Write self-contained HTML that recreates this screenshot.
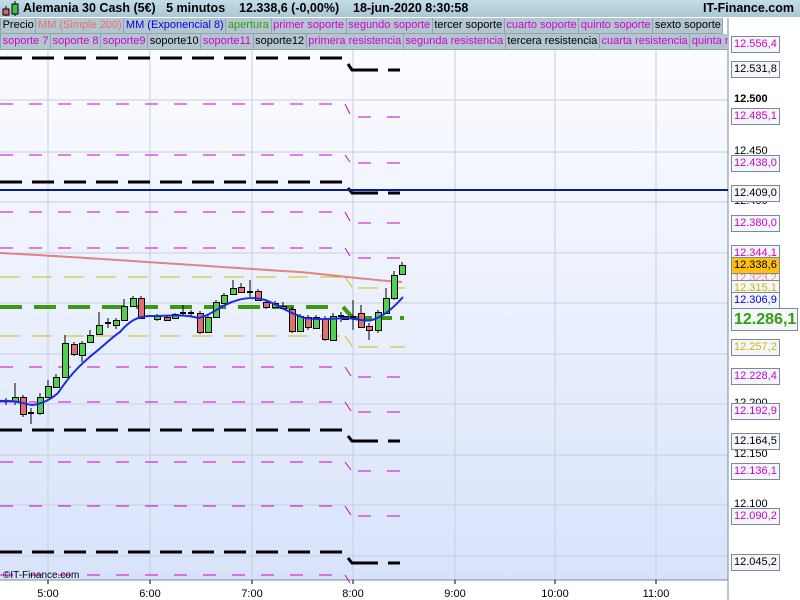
<!DOCTYPE html>
<html><head><meta charset="utf-8"><style>
body{margin:0;width:800px;height:600px;overflow:hidden;font-family:"Liberation Sans",sans-serif;background:#fff;position:relative}
#hdr{position:absolute;left:0;top:0;width:800px;height:17px;background:linear-gradient(#c4dce6,#a9c7d4);font-weight:bold;font-size:12.5px;line-height:17px;color:#000}
.row{position:absolute;left:0;height:16px;font-size:11px;line-height:15px;white-space:nowrap;overflow:hidden}
.row span{display:inline-block;background:#b3c6cf;border:1px solid #90a4ae;border-top:none;padding:0 1.6px;margin-right:-1px;height:15px}
.m{color:#d000d0}.k{color:#000}
.lb{position:absolute;left:731px;width:45px;height:15px;border:1px solid #7a8a98;background:#f4f6fa;font-size:11px;line-height:15px;text-align:left;padding-left:2px;box-sizing:content-box}
.pl{position:absolute;left:734px;font-size:11px;color:#000}
</style></head><body>
<div id="hdr"><svg width="20" height="17" style="position:absolute;left:2px;top:0"><line x1="4" y1="6" x2="4" y2="16" stroke="#000"/><rect x="1" y="9" width="6" height="6" fill="#e06060" stroke="#000"/><line x1="13" y1="1" x2="13" y2="16" stroke="#000"/><rect x="10" y="4" width="6" height="10" fill="#40c040" stroke="#000"/></svg>
<span style="position:absolute;left:23px">Alemania 30 Cash (5€)&nbsp;&nbsp; 5 minutos&nbsp;&nbsp;&nbsp; 12.338,6 (-0,00%)&nbsp;&nbsp;&nbsp; 18-jun-2020 8:30:58</span><span style="position:absolute;right:6px">IT-Finance.com</span></div>
<div class="row" style="top:18px;width:728px"><span class="k">Precio</span><span style="color:#e87070">MM (Simple 200)</span><span style="color:#0000ee">MM (Exponencial 8)</span><span style="color:#30a010">apertura</span><span class="m">primer soporte</span><span class="m">segundo soporte</span><span class="k">tercer soporte</span><span class="m">cuarto soporte</span><span class="m">quinto soporte</span><span class="k">sexto soporte</span></div>
<div class="row" style="top:34px;width:728px"><span class="m">soporte 7</span><span class="m">soporte 8</span><span class="m">soporte9</span><span class="k">soporte10</span><span class="m">soporte11</span><span class="k">soporte12</span><span class="m">primera resistencia</span><span class="m">segunda resistencia</span><span class="k">tercera resistencia</span><span class="m">cuarta resistencia</span><span class="m">quinta resistencia</span></div>
<svg width="800" height="600" style="position:absolute;left:0;top:0;z-index:-1">
<defs><linearGradient id="bg" x1="0" y1="0" x2="0" y2="1"><stop offset="0" stop-color="#fbfcff"/><stop offset="1" stop-color="#d8e3fb"/></linearGradient></defs>
<rect x="0" y="50" width="728" height="530" fill="url(#bg)"/>
<g stroke="#c8cedc" stroke-width="1">
<line x1="0" y1="100" x2="728" y2="100"/><line x1="0" y1="152" x2="728" y2="152"/><line x1="0" y1="202" x2="728" y2="202"/><line x1="0" y1="253" x2="728" y2="253"/><line x1="0" y1="303" x2="728" y2="303"/><line x1="0" y1="354" x2="728" y2="354"/><line x1="0" y1="404" x2="728" y2="404"/><line x1="0" y1="455" x2="728" y2="455"/><line x1="0" y1="505" x2="728" y2="505"/><line x1="0" y1="556" x2="728" y2="556"/>
<line x1="48" y1="50" x2="48" y2="580"/><line x1="150" y1="50" x2="150" y2="580"/><line x1="252" y1="50" x2="252" y2="580"/><line x1="353" y1="50" x2="353" y2="580"/><line x1="455" y1="50" x2="455" y2="580"/><line x1="555" y1="50" x2="555" y2="580"/><line x1="656" y1="50" x2="656" y2="580"/>
</g>
<line x1="728" y1="18" x2="728" y2="600" stroke="#7a8a98"/>
<line x1="0" y1="580" x2="728" y2="580" stroke="#7a8a98"/>
<g stroke="#d000d0" stroke-width="1" fill="none">
<g stroke-dasharray="13,16"><path d="M0 104H345"/><path d="M0 155H345"/><path d="M0 212H345"/><path d="M0 248H345"/><path d="M0 367H345"/><path d="M0 402H345"/><path d="M0 462H345"/><path d="M0 506H345"/><path d="M0 575H345"/>
<path d="M358 117H405"/><path d="M358 163H405"/><path d="M358 223H405"/><path d="M358 258H405"/><path d="M358 377H405"/><path d="M358 412H405"/><path d="M358 471H405"/><path d="M358 516H405"/></g>
<path d="M345 104L350 114M345 155L350 162M345 212L350 221M345 248L350 256M345 367L351 376M345 402L351 411M345 462L351 470M345 506L351 515M345 575L350 583"/>
</g>
<g stroke="#d0c000" stroke-width="1" fill="none"><g stroke-dasharray="20,12"><path d="M0 277H345"/><path d="M0 336H345"/><path d="M358 288H405"/><path d="M358 347H405"/></g><path d="M345 277L352 287M345 336L352 346"/></g>
<g stroke="#000" stroke-width="3" fill="none"><g stroke-dasharray="22,10"><path d="M0 58H342"/><path d="M0 182H342"/><path d="M0 430H342"/><path d="M0 552H342"/><path d="M356 70H400"/><path d="M356 193H400"/><path d="M356 441H400"/><path d="M356 563H400"/></g>
<path d="M348 64L352 70H366M348 188L352 193H366M348 436L352 441H366M348 558L352 563H366"/></g>
<line x1="0" y1="190" x2="728" y2="190" stroke="#0a1a90" stroke-width="2"/>
<path d="M0 253 C100 258 200 266 300 272 C340 276 370 280 402 282" stroke="#e07070" stroke-width="2" fill="none" opacity="0.85"/>
<g stroke="#3a9a10" stroke-width="4" fill="none"><path d="M0 307H340" stroke-dasharray="22,12"/><path d="M343 307L353 318H372M380 318H392M400 318H404"/></g>
<g stroke="#000" stroke-width="1">
<line x1="6" y1="398" x2="6" y2="405"/><line x1="15" y1="383" x2="15" y2="405"/><line x1="23" y1="395" x2="23" y2="417"/><line x1="31" y1="408" x2="31" y2="424"/><line x1="40" y1="393" x2="40" y2="415"/><line x1="48" y1="380" x2="48" y2="398"/><line x1="56" y1="374" x2="56" y2="388"/><line x1="65" y1="335" x2="65" y2="378"/><line x1="74" y1="342" x2="74" y2="356"/><line x1="82" y1="341" x2="82" y2="362"/><line x1="90" y1="330" x2="90" y2="343"/><line x1="99" y1="312" x2="99" y2="335"/><line x1="108" y1="318" x2="108" y2="328"/><line x1="116" y1="318" x2="116" y2="329"/><line x1="124" y1="299" x2="124" y2="321"/><line x1="133" y1="296" x2="133" y2="307"/><line x1="141" y1="296" x2="141" y2="319"/><line x1="157" y1="314" x2="157" y2="321"/><line x1="167" y1="315" x2="167" y2="321"/><line x1="175" y1="313" x2="175" y2="319"/><line x1="183" y1="305" x2="183" y2="316"/><line x1="191" y1="310" x2="191" y2="316"/><line x1="200" y1="311" x2="200" y2="334"/><line x1="208" y1="315" x2="208" y2="333"/><line x1="216" y1="300" x2="216" y2="318"/><line x1="224" y1="293" x2="224" y2="304"/><line x1="233" y1="280" x2="233" y2="295"/><line x1="241" y1="283" x2="241" y2="293"/><line x1="250" y1="280" x2="250" y2="297"/><line x1="258" y1="289" x2="258" y2="301"/><line x1="266" y1="300" x2="266" y2="309"/><line x1="275" y1="301" x2="275" y2="308"/><line x1="283" y1="302" x2="283" y2="310"/><line x1="292" y1="307" x2="292" y2="333"/><line x1="300" y1="314" x2="300" y2="332"/><line x1="308" y1="315" x2="308" y2="330"/><line x1="316" y1="315" x2="316" y2="329"/><line x1="325" y1="316" x2="325" y2="341"/><line x1="333" y1="313" x2="333" y2="341"/><line x1="341" y1="312" x2="341" y2="322"/><line x1="353" y1="300" x2="353" y2="330"/><line x1="361" y1="305" x2="361" y2="328"/><line x1="369" y1="323" x2="369" y2="340"/><line x1="378" y1="310" x2="378" y2="333"/><line x1="386" y1="288" x2="386" y2="314"/><line x1="394" y1="271" x2="394" y2="300"/><line x1="402" y1="262" x2="402" y2="275"/>
</g>
<g stroke="#000" stroke-width="1">
<g fill="#50d050">
<rect x="12.5" y="397.5" width="6" height="4"/><rect x="37.5" y="397.5" width="6" height="16"/><rect x="45.5" y="386.5" width="6" height="11"/><rect x="53.5" y="377.5" width="6" height="10"/><rect x="62.5" y="343.5" width="6" height="34"/><rect x="79.5" y="343.5" width="6" height="12"/><rect x="87.5" y="335.5" width="6" height="7"/><rect x="96.5" y="325.5" width="6" height="9"/><rect x="113.5" y="320.5" width="6" height="5"/><rect x="121.5" y="306.5" width="6" height="14"/><rect x="130.5" y="298.5" width="6" height="8"/><rect x="154.5" y="316.5" width="6" height="3"/><rect x="172.5" y="314.5" width="6" height="4"/><rect x="205.5" y="317.5" width="6" height="15"/><rect x="213.5" y="302.5" width="6" height="15"/><rect x="221.5" y="295.5" width="6" height="8"/><rect x="230.5" y="288.5" width="6" height="6"/><rect x="272.5" y="303.5" width="6" height="4"/><rect x="297.5" y="316.5" width="6" height="15"/><rect x="313.5" y="317.5" width="6" height="11"/><rect x="330.5" y="316.5" width="6" height="24"/><rect x="375.5" y="312.5" width="6" height="18"/><rect x="383.5" y="298.5" width="6" height="15"/><rect x="391.5" y="275.5" width="6" height="23"/><rect x="399.5" y="265.5" width="6" height="9"/>
</g>
<g fill="#e07070">
<rect x="20.5" y="397.5" width="6" height="17"/><rect x="71.5" y="344.5" width="6" height="10"/><rect x="138.5" y="298.5" width="6" height="20"/><rect x="164.5" y="317.5" width="6" height="3"/><rect x="197.5" y="313.5" width="6" height="19"/><rect x="238.5" y="287.5" width="6" height="5"/><rect x="255.5" y="291.5" width="6" height="9"/><rect x="263.5" y="302.5" width="6" height="5"/><rect x="280.5" y="306.5" width="6" height="2"/><rect x="289.5" y="309.5" width="6" height="22"/><rect x="305.5" y="317.5" width="6" height="10"/><rect x="322.5" y="319.5" width="6" height="20"/><rect x="342.5" y="316.5" width="6" height="3"/><rect x="358.5" y="313.5" width="6" height="14"/><rect x="366.5" y="326.5" width="6" height="4"/>
</g>
<g stroke-width="2"><line x1="3" y1="401" x2="9" y2="401"/><line x1="28" y1="413" x2="34" y2="413"/><line x1="105" y1="323" x2="111" y2="323"/><line x1="180" y1="313" x2="186" y2="313"/><line x1="188" y1="313" x2="194" y2="313"/><line x1="247" y1="292" x2="253" y2="292"/><line x1="338" y1="316" x2="344" y2="316"/><line x1="350" y1="317" x2="356" y2="317"/></g>
</g>
<path d="M0 401 C15 400 25 404 32 405 C42 404 50 400 58 393 C70 375 80 365 92 355 C105 345 112 337 120 332 C130 320 138 317 148 316 C170 316 185 314 198 318 C210 316 220 306 232 302 C245 297 255 297 265 300 C275 303 290 314 305 318 C320 320 330 319 345 318 C355 318 365 322 372 320 C385 316 395 306 403 297" stroke="#1a2ae8" stroke-width="2" fill="none"/>
<g stroke="#000"><line x1="48" y1="580" x2="48" y2="584"/><line x1="150" y1="580" x2="150" y2="584"/><line x1="252" y1="580" x2="252" y2="584"/><line x1="353" y1="580" x2="353" y2="584"/><line x1="455" y1="580" x2="455" y2="584"/><line x1="555" y1="580" x2="555" y2="584"/><line x1="656" y1="580" x2="656" y2="584"/></g>
<g font-family="Liberation Sans" font-size="11" fill="#000" text-anchor="middle"><text x="48" y="597">5:00</text><text x="150" y="597">6:00</text><text x="252" y="597">7:00</text><text x="353" y="597">8:00</text><text x="455" y="597">9:00</text><text x="555" y="597">10:00</text><text x="656" y="597">11:00</text></g>
<text x="3" y="578" font-family="Liberation Sans" font-size="10" fill="#000">©IT-Finance.com</text>
</svg>
<div class="pl" style="top:93px;font-weight:bold">12.500</div>
<div class="pl" style="top:145px">12.450</div>
<div class="pl" style="top:195px">12.400</div>
<div class="pl" style="top:397px">12.200</div>
<div class="pl" style="top:448px">12.150</div>
<div class="pl" style="top:498px">12.100</div>
<div class="lb m" style="top:36px">12.556,4</div>
<div class="lb k" style="top:61px">12.531,8</div>
<div class="lb m" style="top:108px">12.485,1</div>
<div class="lb m" style="top:155px">12.438,0</div>
<div class="lb k" style="top:185px">12.409,0</div>
<div class="lb m" style="top:215px">12.380,0</div>
<div class="lb m" style="top:245px">12.344,1</div>
<div class="lb" style="top:270px;color:#f08080">12.323,2</div>
<div class="lb" style="top:280px;color:#c8b800">12.315,1</div>
<div class="lb" style="top:292px;color:#0000ee">12.306,9</div>
<div class="lb k" style="top:257px;background:#ffc010">12.338,6</div>
<div class="lb" style="top:308px;height:21px;line-height:21px;font-size:16px;font-weight:bold;color:#30a010;width:63px">12.286,1</div>
<div class="lb" style="top:339px;color:#c8b800">12.257,2</div>
<div class="lb m" style="top:368px">12.228,4</div>
<div class="lb m" style="top:403px">12.192,9</div>
<div class="lb k" style="top:433px">12.164,5</div>
<div class="lb m" style="top:463px">12.136,1</div>
<div class="lb m" style="top:508px">12.090,2</div>
<div class="lb k" style="top:554px">12.045,2</div>
</body></html>
